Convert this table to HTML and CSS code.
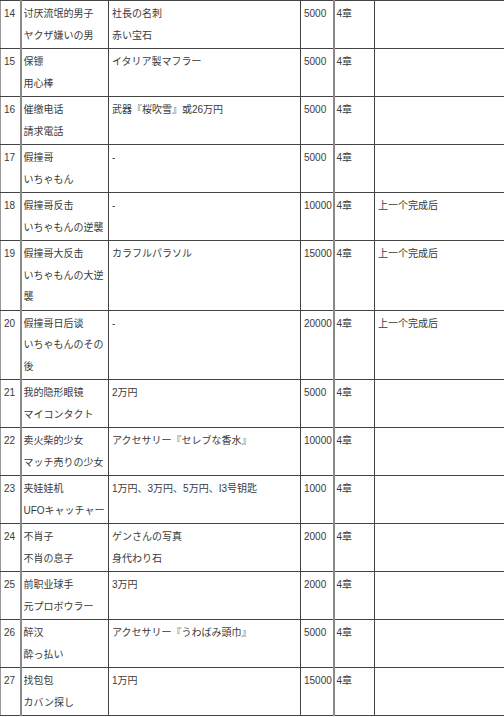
FILE: index.html
```html
<!DOCTYPE html>
<html lang="zh">
<head>
<meta charset="utf-8">
<link rel="stylesheet" href="styles.css">
</head>
<body>
<table class="quests">
<colgroup>
<col class="c-no"><col class="c-name"><col class="c-reward"><col class="c-money"><col class="c-chap"><col class="c-note">
</colgroup>
<tbody>
<tr><td>14</td><td class="name">讨厌流氓的男子<br>ヤクザ嫌いの男</td><td>社長の名刺<br>赤い宝石</td><td class="money">5000</td><td class="chap">4章</td><td></td></tr>
<tr><td>15</td><td class="name">保镖<br>用心棒</td><td>イタリア製マフラー</td><td class="money">5000</td><td class="chap">4章</td><td></td></tr>
<tr><td>16</td><td class="name">催缴电话<br>請求電話</td><td>武器『桜吹雪』或26万円</td><td class="money">5000</td><td class="chap">4章</td><td></td></tr>
<tr><td>17</td><td class="name">假撞哥<br>いちゃもん</td><td>-</td><td class="money">5000</td><td class="chap">4章</td><td></td></tr>
<tr><td>18</td><td class="name">假撞哥反击<br>いちゃもんの逆襲</td><td>-</td><td class="money">10000</td><td class="chap">4章</td><td>上一个完成后</td></tr>
<tr><td>19</td><td class="name">假撞哥大反击<br>いちゃもんの大逆襲</td><td>カラフルパラソル</td><td class="money">15000</td><td class="chap">4章</td><td>上一个完成后</td></tr>
<tr><td>20</td><td class="name">假撞哥日后谈<br>いちゃもんのその後</td><td>-</td><td class="money">20000</td><td class="chap">4章</td><td>上一个完成后</td></tr>
<tr><td>21</td><td class="name">我的隐形眼镜<br>マイコンタクト</td><td>2万円</td><td class="money">5000</td><td class="chap">4章</td><td></td></tr>
<tr><td>22</td><td class="name">卖火柴的少女<br>マッチ売りの少女</td><td>アクセサリー『セレブな香水』</td><td class="money">10000</td><td class="chap">4章</td><td></td></tr>
<tr><td>23</td><td class="name">夹娃娃机<br>UFOキャッチャー</td><td>1万円、3万円、5万円、I3号钥匙</td><td class="money">1000</td><td class="chap">4章</td><td></td></tr>
<tr><td>24</td><td class="name">不肖子<br>不肖の息子</td><td>ゲンさんの写真<br>身代わり石</td><td class="money">2000</td><td class="chap">4章</td><td></td></tr>
<tr><td>25</td><td class="name">前职业球手<br>元プロボウラー</td><td>3万円</td><td class="money">2000</td><td class="chap">4章</td><td></td></tr>
<tr><td>26</td><td class="name">醉汉<br>酔っ払い</td><td>アクセサリー『うわばみ頭巾』</td><td class="money">5000</td><td class="chap">4章</td><td></td></tr>
<tr><td>27</td><td class="name">找包包<br>カバン探し</td><td>1万円</td><td class="money">15000</td><td class="chap">4章</td><td></td></tr>
</tbody>
</table>
</body>
</html>
```
FILE: styles.css
```css
html, body {
  margin: 0;
  padding: 0;
  background: #fff;
}
.quests {
  border-collapse: collapse;
  table-layout: fixed;
  width: 504px;
  font-family: "Liberation Sans", "Noto Sans CJK SC", sans-serif;
  font-size: 10px;
  line-height: 21.5px;
  color: #3a3a3a;
}
.c-no { width: 20px; }
.c-name { width: 88px; }
.c-reward { width: 192px; }
.c-money { width: 33px; }
.c-chap { width: 41px; }
.c-note { width: 130px; }
.quests td {
  border: 1px solid #444;
  padding: 2px 2px 2px 3px;
  vertical-align: top;
  white-space: normal;
  word-break: break-all;
}
.quests td:first-child {
  border-left: 1px solid #999;
}
.quests td.name,
.quests td.chap {
  border-left: 2px solid #8a8a8a;
}
.quests td.name { padding-left: 2px; }
.quests td.chap { padding-left: 2px; }
.quests td.money {
  white-space: nowrap;
  overflow: visible;
  padding-right: 0;
}
```
